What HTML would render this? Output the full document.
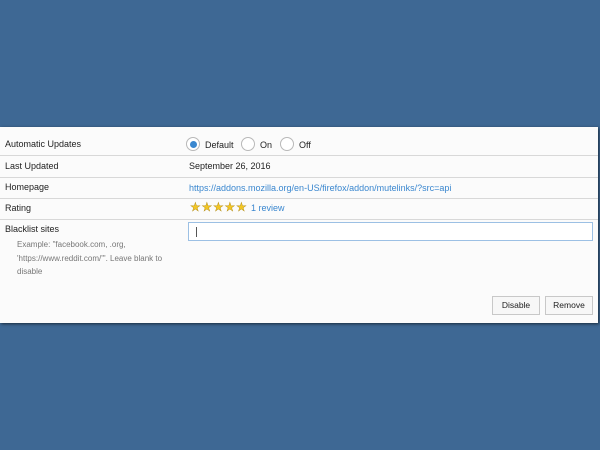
<!DOCTYPE html><html><head><style>
body{margin:0;width:600px;height:450px;background:#3e6894;font-family:"Liberation Sans",sans-serif;font-size:9px;color:#222;position:relative;overflow:hidden}
.p{position:absolute;left:0;top:127px;width:598px;height:196px;background:#fbfbfb;box-shadow:1px 1px 3px rgba(0,0,0,.6)}
.t{position:absolute;white-space:nowrap}
.l{position:absolute;left:0;width:598px;height:1px;background:#d8d8d8}
.r{position:absolute;width:14px;height:14px;border:1px solid #b8b8b8;border-radius:50%;background:#fff;box-sizing:border-box}
.a{color:#3a87cf}
.b{position:absolute;top:169px;width:48px;height:19px;border:1px solid #c8c8c8;background:#f7f7f7;box-sizing:border-box;text-align:center;line-height:17px;font-size:8.5px}
.g{color:#777;font-size:8px}
.s{position:absolute;top:74px;color:#f3c623;font-size:12px;line-height:12px;-webkit-text-stroke:0.4px #b08a10}
</style></head><body><div class="p">
<div class="t" style="left:5px;top:12px">Automatic Updates</div>
<div class="r" style="left:186px;top:10px"><div style="position:absolute;left:2.5px;top:2.5px;width:7px;height:7px;border-radius:50%;background:#3a87cf"></div></div>
<div class="t" style="left:205px;top:13px">Default</div>
<div class="r" style="left:241px;top:10px"></div><div class="t" style="left:260px;top:13px">On</div>
<div class="r" style="left:280px;top:10px"></div><div class="t" style="left:299px;top:13px">Off</div>
<div class="l" style="top:28px"></div>
<div class="t" style="left:5px;top:34px">Last Updated</div>
<div class="t" style="left:189px;top:34px">September 26, 2016</div>
<div class="l" style="top:50px"></div>
<div class="t" style="left:5px;top:55px">Homepage</div>
<div class="t a" style="left:189px;top:56px">https://addons.mozilla.org/en-US/firefox/addon/mutelinks/?src=api</div>
<div class="l" style="top:71px"></div>
<div class="t" style="left:5px;top:76px">Rating</div>
<div class="s" style="left:190px">★</div><div class="s" style="left:201.5px">★</div><div class="s" style="left:213px">★</div><div class="s" style="left:224.5px">★</div><div class="s" style="left:236px">★</div>
<div class="t a" style="left:251px;top:76px">1 review</div>
<div class="l" style="top:92px"></div>
<div class="t" style="left:5px;top:97px">Blacklist sites</div>
<div class="t g" style="left:17px;top:111px;line-height:13.5px">Example: "facebook.com, .org,<br>'https://www.reddit.com/'". Leave blank to<br>disable</div>
<div style="position:absolute;left:188px;top:95px;width:405px;height:19px;border:1px solid #9cc0e4;background:#fff;box-sizing:border-box"><div style="position:absolute;left:7px;top:4px;width:1px;height:10px;background:#555"></div></div>
<div class="b" style="left:492px">Disable</div>
<div class="b" style="left:545px">Remove</div>
</div></body></html>
